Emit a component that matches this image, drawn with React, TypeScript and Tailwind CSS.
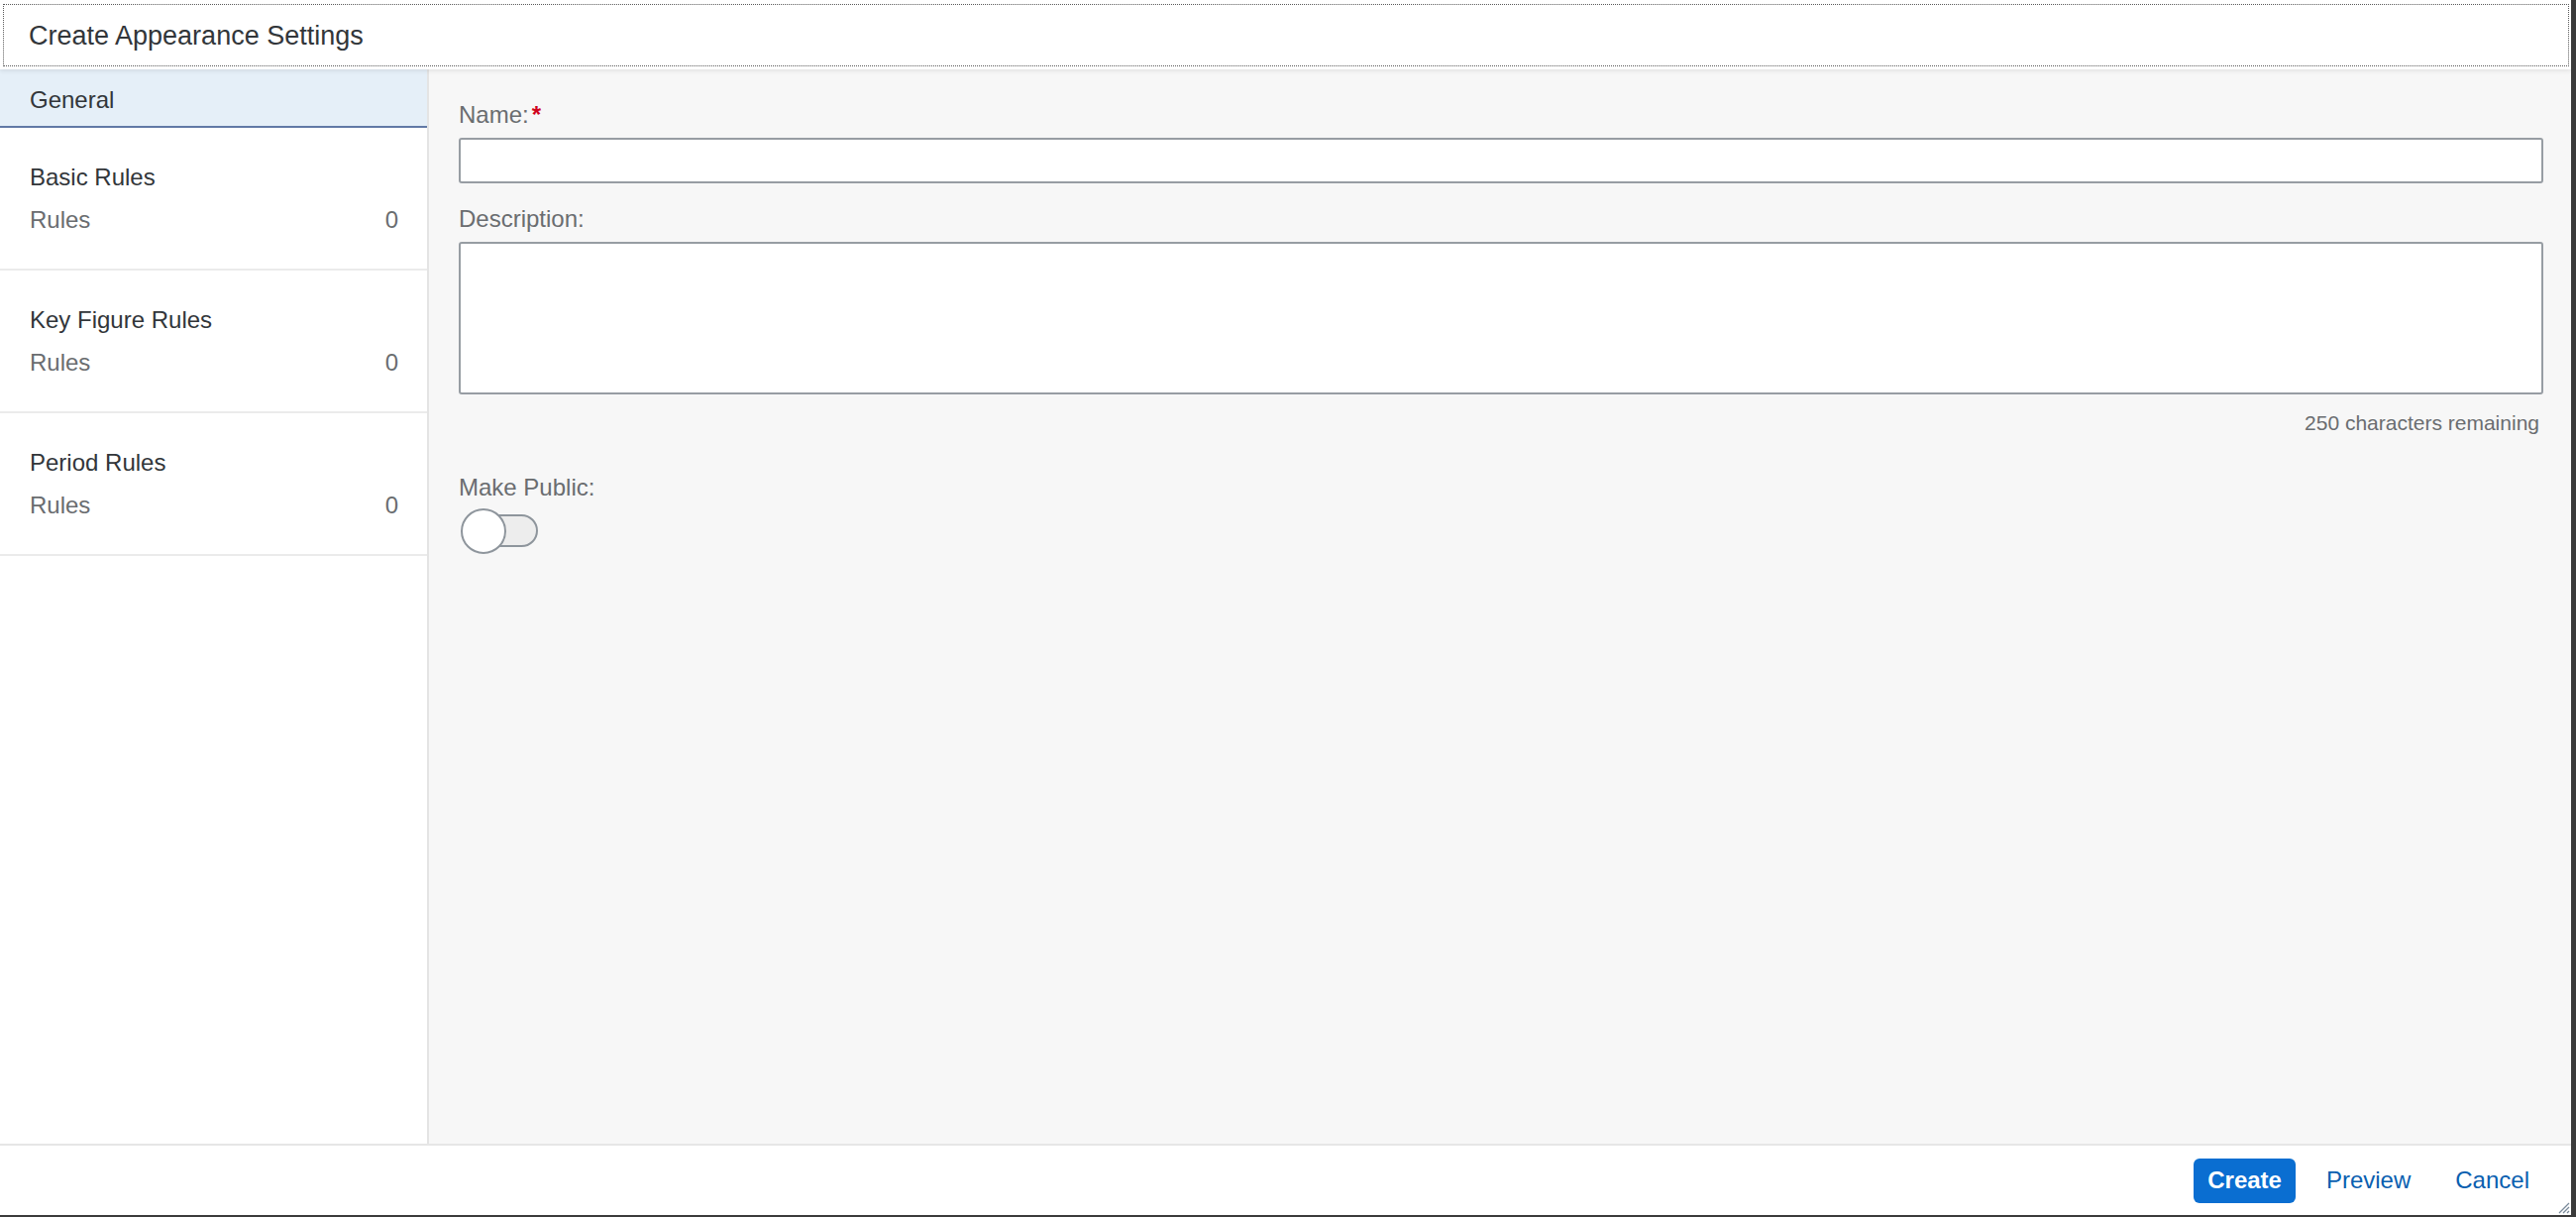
import React from "react";

const groups = [
  { title: "Basic Rules", count: 0 },
  { title: "Key Figure Rules", count: 0 },
  { title: "Period Rules", count: 0 },
];

const App = () => {
  return (
    <div
      className="relative w-[2600px] h-[1228px] flex flex-col bg-white border-r-[5px] border-b-2 border-[#3b3b3b] overflow-hidden"
      style={{ fontFamily: '"Liberation Sans", Arial, sans-serif' }}
    >
      {/* Header */}
      <div className="relative z-10 h-[70px] shrink-0 bg-white pt-[4px] pl-[3px] pr-[2px] shadow-[0_2px_4px_rgba(0,0,0,0.08)]">
        <div className="h-[63px] border border-dotted border-[#5a5a5a] flex items-center pl-[25px]">
          <h1 className="text-[27px] leading-[32px] text-[#32363a]">Create Appearance Settings</h1>
        </div>
      </div>

      {/* Body */}
      <div className="flex flex-1 min-h-0">
        {/* Sidebar */}
        <div className="w-[433px] shrink-0 bg-white border-r-2 border-[#e4e4e4] flex flex-col">
          <div className="h-[59px] bg-[#e5eff8] border-b-2 border-[#6179a6] flex items-center pl-[30px] pt-[4px]">
            <span className="text-[24px] leading-[28px] text-[#32363a]">General</span>
          </div>
          {groups.map((g) => (
            <div
              key={g.title}
              className="h-[144px] border-b-2 border-[#ebebeb] pt-[36px] pl-[30px] pr-[29px] flex flex-col gap-[15px]"
            >
              <span className="text-[24px] leading-[28px] text-[#32363a]">{g.title}</span>
              <div className="flex justify-between text-[24px] leading-[28px] text-[#6a6d70]">
                <span>Rules</span>
                <span>{g.count}</span>
              </div>
            </div>
          ))}
        </div>

        {/* Content */}
        <div className="flex-1 bg-[#f7f7f7] pl-[30px] pr-[28px] pt-[32px] flex flex-col">
          <label className="text-[24px] leading-[28px] text-[#6a6d70]">
            Name:<span className="text-[#d0021b] font-bold ml-[3px]">*</span>
          </label>
          <div className="mt-[9px] h-[46px] bg-white border-2 border-[#979da3] rounded-[3px]" />

          <label className="mt-[22px] text-[24px] leading-[28px] text-[#6a6d70]">Description:</label>
          <div className="mt-[9px] h-[154px] bg-white border-2 border-[#979da3] rounded-[3px]" />

          <div className="mt-[17px] text-right pr-[4px] text-[21px] leading-[24px] text-[#6a6d70]">
            250 characters remaining
          </div>

          <label className="mt-[39px] text-[24px] leading-[28px] text-[#6a6d70]">Make Public:</label>
          <div className="relative mt-[7px] ml-[2px] w-[80px] h-[46px]">
            <div className="absolute left-[22px] top-[6px] w-[56px] h-[33px] rounded-full bg-[#ededed] border-2 border-[#8e959c]" />
            <div className="absolute left-0 top-0 w-[46px] h-[46px] rounded-full bg-white border-2 border-[#8e959c]" />
          </div>
        </div>
      </div>

      {/* Footer */}
      <div className="h-[72px] shrink-0 border-t-2 border-[#e6e6e6] bg-white flex items-center justify-end gap-[17px] pr-[28px]">
        <button className="h-[45px] px-[14px] rounded-[6px] bg-[#0a6ed1] text-white text-[24px] font-bold">
          Create
        </button>
        <button className="h-[45px] px-[14px] text-[24px] text-[#0a5fb0]">Preview</button>
        <button className="h-[45px] px-[14px] text-[24px] text-[#0a5fb0]">Cancel</button>
      </div>

      {/* resize grip */}
      <svg
        className="absolute right-[1px] bottom-[1px]"
        width="16"
        height="16"
        viewBox="0 0 16 16"
      >
        <path d="M15 5 L5 15 M15 9 L9 15 M15 13 L13 15" stroke="#7a8a9a" strokeWidth="1.3" />
      </svg>
    </div>
  );
};

export default App;
